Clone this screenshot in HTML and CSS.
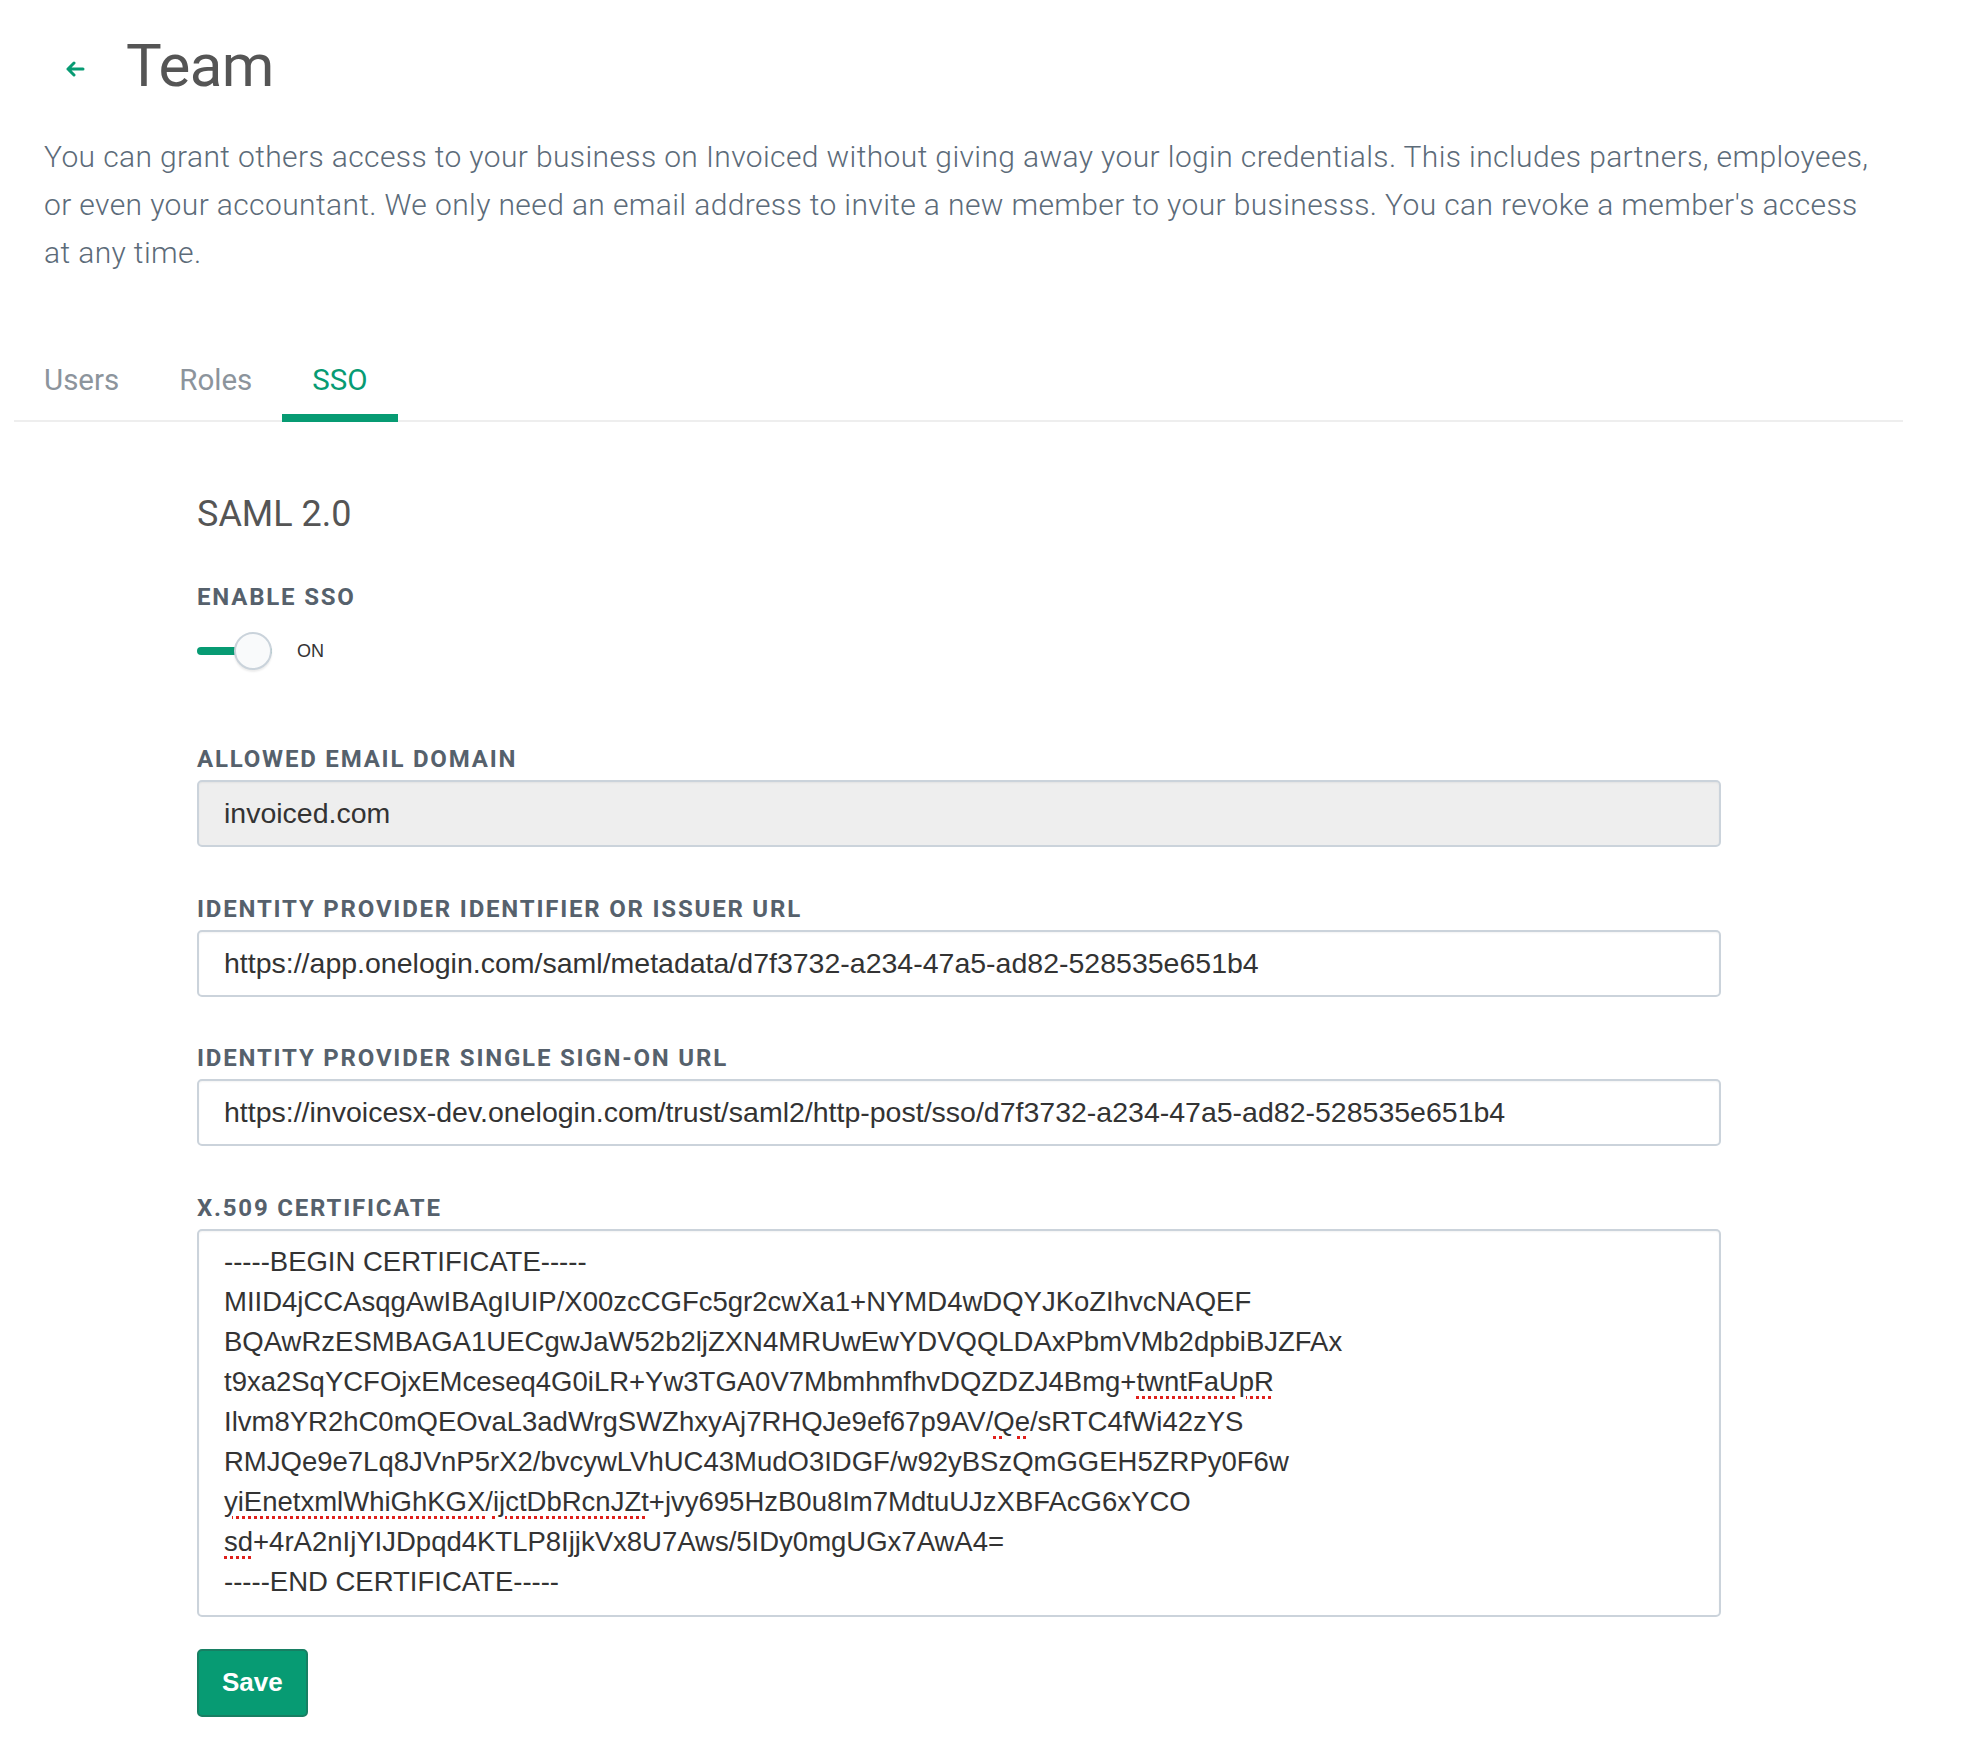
FILE: index.html
```html
<!DOCTYPE html>
<html lang="en">
<head>
<meta charset="utf-8">
<title>Team</title>
<link rel="stylesheet" href="styles.css">
</head>
<body>
<div class="page">
  <header class="page-header">
    <a class="back" href="#" aria-label="Back">
      <svg width="20" height="16" viewBox="0 0 20 16"><path d="M18 8H3M9 2L3 8l6 6" fill="none" stroke="#079b73" stroke-width="3" stroke-linecap="round" stroke-linejoin="round"/></svg>
    </a>
    <h1 class="title">Team</h1>
  </header>
  <p class="intro">You can grant others access to your business on Invoiced without giving away your login credentials. This includes partners, employees, or even your accountant. We only need an email address to invite a new member to your businesss. You can revoke a member's access at any time.</p>

  <nav class="tabs">
    <a class="tab" href="#">Users</a>
    <a class="tab" href="#">Roles</a>
    <a class="tab active" href="#">SSO</a>
  </nav>

  <section class="form">
    <h2 class="form-title">SAML 2.0</h2>

    <div class="group toggle-group">
      <label class="label">Enable SSO</label>
      <div class="toggle-row">
        <span class="toggle"><span class="knob"></span></span>
        <span class="toggle-text">ON</span>
      </div>
    </div>

    <div class="group">
      <label class="label">Allowed Email Domain</label>
      <div class="field disabled">invoiced.com</div>
    </div>

    <div class="group">
      <label class="label">Identity Provider Identifier or Issuer URL</label>
      <div class="field">https://app.onelogin.com/saml/metadata/d7f3732-a234-47a5-ad82-528535e651b4</div>
    </div>

    <div class="group">
      <label class="label">Identity Provider Single Sign-On URL</label>
      <div class="field">https://invoicesx-dev.onelogin.com/trust/saml2/http-post/sso/d7f3732-a234-47a5-ad82-528535e651b4</div>
    </div>

    <div class="group last">
      <label class="label">X.509 Certificate</label>
      <div class="field area">-----BEGIN CERTIFICATE-----
MIID4jCCAsqgAwIBAgIUIP/X00zcCGFc5gr2cwXa1+NYMD4wDQYJKoZIhvcNAQEF
BQAwRzESMBAGA1UECgwJaW52b2ljZXN4MRUwEwYDVQQLDAxPbmVMb2dpbiBJZFAx
t9xa2SqYCFOjxEMceseq4G0iLR+Yw3TGA0V7MbmhmfhvDQZDZJ4Bmg+<span class="sp">twntFaUpR</span>
Ilvm8YR2hC0mQEOvaL3adWrgSWZhxyAj7RHQJe9ef67p9AV/<span class="sp">Qe</span>/sRTC4fWi42zYS
RMJQe9e7Lq8JVnP5rX2/bvcywLVhUC43MudO3IDGF/w92yBSzQmGGEH5ZRPy0F6w
<span class="sp">yiEnetxmlWhiGhKGX</span>/<span class="sp">ijctDbRcnJZt</span>+jvy695HzB0u8Im7MdtuUJzXBFAcG6xYCO
<span class="sp">sd</span>+4rA2nIjYIJDpqd4KTLP8IjjkVx8U7Aws/5IDy0mgUGx7AwA4=
-----END CERTIFICATE-----</div>
    </div>

    <button class="btn-save" type="button">Save</button>
  </section>
</div>
</body>
</html>
```

FILE: styles.css
```css
* { box-sizing: border-box; }

html, body {
  margin: 0;
  padding: 0;
  background: #ffffff;
}

body {
  font-family: Roboto, "Noto Sans", Arial, sans-serif;
  color: #333;
}

.page {
  margin-left: 15px;
  width: 1888px;
  padding-bottom: 40px;
}

.page-header {
  display: flex;
  align-items: center;
  padding: 30px 0 0 50px;
  height: 102px;
}

.back {
  display: flex;
  width: 20px;
  height: 16px;
  margin-right: 41px;
  margin-top: 5px;
}

.title {
  margin: 0;
  font-size: 60px;
  line-height: 72px;
  font-weight: 400;
  color: #555555;
  letter-spacing: -0.5px;
}

.intro {
  margin: 31px 0 0 0;
  padding: 0 18px 0 29px;
  font-size: 30px;
  line-height: 48px;
  font-weight: 300;
  letter-spacing: 0.38px;
  color: #5c6b79;
}

.tabs {
  display: flex;
  margin-top: 58px;
  margin-left: -1px;
  border-bottom: 2px solid #eeeeee;
}

.tab {
  display: block;
  padding: 28px 30px 17px;
  margin-bottom: -2px;
  font-size: 29.5px;
  line-height: 34px;
  color: #8c949c;
  text-decoration: none;
  border-bottom: 8px solid transparent;
}

.tab.active {
  color: #079b73;
  border-bottom-color: #079b73;
}

.form {
  padding: 70px 0 0 182px;
  width: 1706px;
}

.form-title {
  margin: 0;
  font-size: 36px;
  line-height: 44px;
  font-weight: 400;
  color: #555555;
}

.group {
  margin-bottom: 47.5px;
}

.group.last {
  margin-bottom: 32px;
}

.toggle-group {
  margin-top: 47px;
  margin-bottom: 75px;
}

.label {
  display: block;
  margin-bottom: 7px;
  font-size: 24px;
  line-height: 28px;
  font-weight: 700;
  letter-spacing: 1.8px;
  text-transform: uppercase;
  color: #56616c;
}

.toggle-group .label {
  margin-bottom: 21px;
}

.toggle-row {
  display: flex;
  align-items: center;
  height: 38px;
}

.toggle {
  position: relative;
  display: block;
  width: 75px;
  height: 8px;
  border-radius: 4px;
  background: #079b73;
}

.knob {
  position: absolute;
  right: 0;
  top: -15px;
  width: 38px;
  height: 38px;
  border-radius: 50%;
  background: #f9fafb;
  border: 2px solid #cad3db;
  box-shadow: 0 2px 2px rgba(0, 0, 0, 0.08);
}

.toggle-text {
  margin-left: 25px;
  font-family: "Liberation Sans", Arial, sans-serif;
  font-size: 18px;
  color: #333;
}

.field {
  height: 67px;
  padding: 0 25px;
  border: 2px solid #cbd3db;
  border-radius: 5px;
  background: #ffffff;
  box-shadow: inset 0 1px 2px rgba(0, 0, 0, 0.05);
  font-family: "Liberation Sans", Arial, sans-serif;
  font-size: 28.5px;
  line-height: 63px;
  color: #333;
  white-space: nowrap;
}

.field.disabled {
  background: #eeeeee;
}

.field.area {
  height: 388px;
  padding: 11px 25px 12px;
  font-size: 27.5px;
  line-height: 40px;
  white-space: pre;
}

.sp {
  text-decoration: underline dotted #e0201c;
  text-decoration-thickness: 3px;
  text-underline-offset: 5px;
}

.btn-save {
  display: block;
  height: 68px;
  padding: 0 23px;
  border: 2px solid #187f63;
  border-radius: 5px;
  background: #079b73;
  color: #ffffff;
  font-family: "Liberation Sans", Arial, sans-serif;
  font-size: 26px;
  font-weight: 700;
  cursor: pointer;
}
```
